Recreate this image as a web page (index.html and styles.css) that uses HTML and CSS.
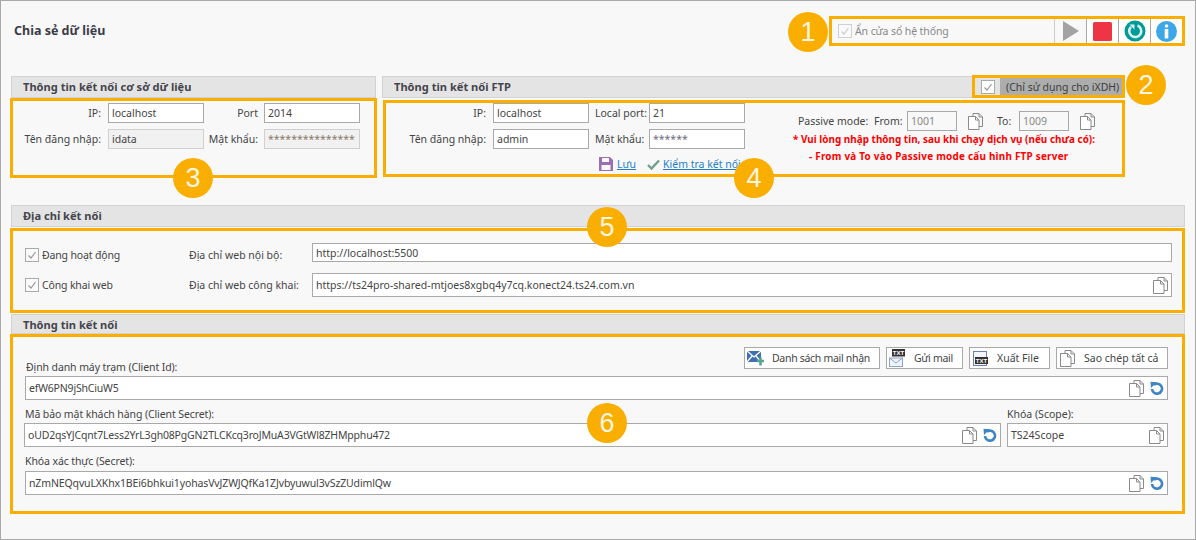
FILE: index.html
```html
<!DOCTYPE html>
<html lang="vi">
<head>
<meta charset="utf-8">
<title>Chia sẻ dữ liệu</title>
<link rel="stylesheet" href="styles.css">
</head>
<body>
<svg class="defs" width="0" height="0" aria-hidden="true">
  <symbol id="copy" viewBox="0 0 15 17">
    <path d="M5 3V.5h6l3.500 3.500v9.500H11" fill="none" stroke="#8a8a8a"/>
    <path d="M11 .5V4h3.500" fill="none" stroke="#8a8a8a"/>
    <path d="M.5 3.500h7L11 7v9.500H.5z" fill="#fff" stroke="#8a8a8a"/>
    <path d="M7.500 3.500V7H11" fill="none" stroke="#8a8a8a"/>
  </symbol>
  <symbol id="undo" viewBox="0 0 14 14">
    <path d="M3.800 3.800A5 5 0 1 1 2 8" fill="none" stroke="#3f84c4" stroke-width="2.600"/>
    <path d="M.5.800 6.800 1.200 1 7z" fill="#3f84c4"/>
  </symbol>
</svg>
<main class="page">
  <header class="topbar">
    <h1 class="title">Chia sẻ dữ liệu</h1>
    <div class="toolbar">
      <label class="tool-check"><span class="check check-off"><svg viewBox="0 0 12 12"><path d="M2.500 6.500 5 9l4.500-6" fill="none" stroke="currentColor" stroke-width="1.200"/></svg></span>Ẩn cửa sổ hệ thống</label>
      <button class="tool tool-play" type="button" aria-label="Chạy"><svg width="16" height="20" viewBox="0 0 16 20"><path d="M0 0 16 10 0 20z" fill="#a3a3a3"/></svg></button>
      <button class="tool" type="button" aria-label="Dừng"><svg width="19" height="19" viewBox="0 0 19 19"><rect width="19" height="19" rx="1.500" fill="#ee3546"/></svg></button>
      <button class="tool" type="button" aria-label="Tải lại"><svg width="22" height="22" viewBox="0 0 22 22"><circle cx="11" cy="11" r="10.500" fill="#009a97"/><path d="M7 6.800a6 6 0 1 0 6.500-1.300" fill="none" stroke="#d8f2f1" stroke-width="2.600"/><path d="M5.500 4.500h5v5z" fill="#d8f2f1"/></svg></button>
      <button class="tool tool-last" type="button" aria-label="Thông tin"><svg width="21" height="21" viewBox="0 0 21 21"><circle cx="10.500" cy="10.500" r="10.500" fill="#3da7e8"/><circle cx="10.500" cy="5" r="1.800" fill="#fff"/><rect x="8.700" y="8" width="3.600" height="9.500" rx=".6" fill="#fff"/></svg></button>
    </div>
  </header>

  <div class="columns">
    <section class="col-db">
      <h2 class="head head-inset">Thông tin kết nối cơ sở dữ liệu</h2>
      <div class="frame db-grid">
        <span class="lbl lbl-r">IP:</span><span class="field">localhost</span>
        <span class="lbl lbl-r lbl-r2">Port</span><span class="field">2014</span>
        <span class="lbl lbl-r">Tên đăng nhập:</span><span class="field field-off">idata</span>
        <span class="lbl lbl-r lbl-r2">Mật khẩu:</span><span class="field field-off field-pass">***************</span>
      </div>
    </section>
    <section class="col-ftp">
      <h2 class="head head-ftp">Thông tin kết nối FTP
        <span class="ixdh"><span class="ixdh-box"><span class="check"><svg viewBox="0 0 12 12"><path d="M2.500 6.500 5 9l4.500-6" fill="none" stroke="currentColor" stroke-width="1.200"/></svg></span></span><span class="ixdh-text">(Chỉ sử dụng cho iXDH)</span></span>
      </h2>
      <div class="frame ftp-frame">
        <div class="ftp-main">
          <div class="ftp-grid">
            <span class="lbl lbl-r">IP:</span><span class="field">localhost</span>
            <span class="lbl">Local port:</span><span class="field">21</span>
            <span class="lbl lbl-r">Tên đăng nhập:</span><span class="field">admin</span>
            <span class="lbl">Mật khẩu:</span><span class="field field-pass">******</span>
          </div>
          <div class="ftp-actions">
            <svg width="14" height="14" viewBox="0 0 14 14"><path d="M0 0h11l3 3v11H0z" fill="#9a6fb5"/><rect x="3" y="1" width="7" height="4" fill="#f8f8f8"/><rect x="2.500" y="8" width="9" height="5" fill="#f8f8f8"/></svg>
            <a class="link link-save" href="#">Lưu</a>
            <svg class="icon-test" width="13" height="11" viewBox="0 0 13 11"><path d="M1 6 4.500 9.500 12 1.500" fill="none" stroke="#6f9f8e" stroke-width="2.400"/></svg>
            <a class="link" href="#">Kiểm tra kết nối</a>
          </div>
        </div>
        <div class="passive">
          <div class="passive-row">
            <span class="lbl lbl-passive">Passive mode:</span>
            <span class="lbl lbl-from">From:</span>
            <span class="field field-num">1001</span>
            <svg class="ico-copy" width="15" height="17"><use href="#copy"/></svg>
            <span class="lbl lbl-to">To:</span>
            <span class="field field-num">1009</span>
            <svg class="ico-copy" width="15" height="17"><use href="#copy"/></svg>
          </div>
          <p class="warn warn-first">* Vui lòng nhập thông tin, sau khi chạy dịch vụ (nếu chưa có):</p>
          <p class="warn warn-second">- From và To vào Passive mode cấu hình FTP server</p>
        </div>
      </div>
    </section>
  </div>

  <section class="sec-addr">
    <h2 class="head head-inset">Địa chỉ kết nối</h2>
    <div class="frame addr-grid">
      <label class="tick addr-end"><span class="check"><svg viewBox="0 0 12 12"><path d="M2.500 6.500 5 9l4.500-6" fill="none" stroke="currentColor" stroke-width="1.200"/></svg></span>Đang hoạt động</label>
      <span class="lbl addr-end">Địa chỉ web nội bộ:</span>
      <span class="field field-line">http://localhost:5500</span>
      <label class="tick"><span class="check"><svg viewBox="0 0 12 12"><path d="M2.500 6.500 5 9l4.500-6" fill="none" stroke="currentColor" stroke-width="1.200"/></svg></span>Công khai web</label>
      <span class="lbl">Địa chỉ web công khai:</span>
      <span class="field field-line field-tall"><span class="val">https://ts24pro-shared-mtjoes8xgbq4y7cq.konect24.ts24.com.vn</span><svg width="15" height="17"><use href="#copy"/></svg></span>
    </div>
  </section>

  <section class="sec-info">
    <h2 class="head head-inset head-info">Thông tin kết nối</h2>
    <div class="frame info-frame">
      <div class="info-top">
        <span class="lbl info-lbl">Định danh máy trạm (Client Id):</span>
        <div class="btns">
          <button class="btn btn-a" type="button"><svg width="17" height="16" viewBox="0 0 17 16"><rect y="1" width="14" height="11" fill="#3f6fb5"/><path d="M0 1 7 7l7-6M0 12l5-6M14 12 9 6" fill="none" stroke="#fff" stroke-width="1.300"/><path d="M10 11h7M13.500 7.500v8" stroke="#5aa58f" stroke-width="2.600"/></svg>Danh sách mail nhận</button>
          <button class="btn btn-b" type="button"><svg width="16" height="18" viewBox="0 0 16 18"><rect x=".5" y="9" width="13" height="8.500" fill="#eef2fa" stroke="#8ea4cc"/><path d="M.5 9 7 14l6.500-5" fill="none" stroke="#8ea4cc"/><rect x="3" y="0" width="13" height="7.500" fill="#333"/><text class="ico-txt" x="9.500" y="6.300">TXT</text></svg>Gửi mail</button>
          <button class="btn btn-c" type="button"><svg width="15" height="15" viewBox="0 0 15 15"><rect x=".5" y=".5" width="13" height="14" fill="#f3f5fb" stroke="#6a7fb5"/><rect x="2" y="6" width="13" height="7" fill="#333"/><text class="ico-txt" x="8.500" y="12">TXT</text></svg>Xuất File</button>
          <button class="btn btn-d" type="button"><svg width="15" height="17"><use href="#copy"/></svg>Sao chép tất cả</button>
        </div>
      </div>
      <div class="field field-line field-tall"><span class="val val-key">efW6PN9jShCiuW5</span><svg width="15" height="17"><use href="#copy"/></svg><svg class="ico-undo" width="14" height="14"><use href="#undo"/></svg></div>
      <div class="secret-grid">
        <span class="lbl info-lbl">Mã bảo mật khách hàng (Client Secret):</span>
        <span class="lbl scope-lbl">Khóa (Scope):</span>
        <div class="field field-line field-tall"><span class="val val-key">oUD2qsYJCqnt7Less2YrL3gh08PgGN2TLCKcq3roJMuA3VGtWl8ZHMpphu472</span><svg width="15" height="17"><use href="#copy"/></svg><svg class="ico-undo" width="14" height="14"><use href="#undo"/></svg></div>
        <div class="field field-line field-tall"><span class="val">TS24Scope</span><svg width="15" height="17"><use href="#copy"/></svg></div>
      </div>
      <span class="lbl third-lbl">Khóa xác thực (Secret):</span>
      <div class="field field-line field-tall"><span class="val val-key val-wide">nZmNEQqvuLXKhx1BEi6bhkui1yohasVvJZWJQfKa1ZJvbyuwul3vSzZUdimlQw</span><svg width="15" height="17"><use href="#copy"/></svg><svg class="ico-undo" width="14" height="14"><use href="#undo"/></svg></div>
    </div>
  </section>

  <span class="badge badge-1">1</span>
  <span class="badge badge-2">2</span>
  <span class="badge badge-3">3</span>
  <span class="badge badge-4">4</span>
  <span class="badge badge-5">5</span>
  <span class="badge badge-6">6</span>
</main>
</body>
</html>
```

FILE: styles.css
```css
* { box-sizing: border-box; }
html, body { margin: 0; padding: 0; }
body { font: 10.5px/16px "Noto Sans", "Open Sans", sans-serif; color: #444; background: #f8f8f8; }
.defs { position: absolute; }
.page {
  position: relative;
  width: 1196px;
  height: 540px;
  border: 1px solid #a9a9a9;
  padding: 15px 10px 0 9px;
  background: #f8f8f8;
  overflow: hidden;
}
svg { display: block; flex: none; }
p, h1, h2 { margin: 0; }

/* top */
.topbar { display: flex; justify-content: space-between; align-items: center; height: 30px; }
.title { font-size: 12.5px; font-weight: 700; color: #3c3c48; padding-left: 4px; }
.toolbar {
  display: flex;
  width: 356px;
  height: 30px;
  border: 3px solid #f9ae00;
  background: #f8f8f8;
}
.tool-check { display: flex; align-items: center; gap: 3px; width: 222px; padding-left: 6px; color: #888; letter-spacing: -.1px; }
.tool {
  display: flex;
  align-items: center;
  justify-content: center;
  width: 32px;
  padding: 0;
  background: #fff;
  border: 0;
  border-left: 1.5px solid #a9a9a9;
}
.tool-play { background: #f8f8f8; border-left: 1px solid #ccc; }

.check {
  display: flex;
  width: 14px;
  height: 14px;
  flex: none;
  background: #fafafa;
  border: 1px solid #aaa;
  color: #999;
}
.check-off { border-color: #d0d0d0; color: #ccc; }

/* heads */
.head {
  height: 22px;
  font-size: 11.1px;
  line-height: 20px;
  font-weight: 700;
  color: #44444c;
  background: #e4e4e4;
  border: 1px solid #d2d2d2;
  padding-left: 11px;
}
.head-inset { margin: 0 1px; }
.frame { border: 3px solid #f9ae00; }

/* columns */
.columns { display: flex; gap: 5px; margin-top: 30px; }
.col-db { width: 367px; }
.col-ftp { width: 743px; }
.db-grid {
  height: 80px;
  padding: 2px 0 0;
  display: grid;
  grid-template-columns: 95px 96px 60px 96px;
  grid-auto-rows: 20px;
  row-gap: 6px;
  align-items: center;
}
.lbl { white-space: nowrap; }
.lbl-r { text-align: right; padding-right: 7px; }
.lbl-r2 { padding-right: 6px; }
.field {
  display: flex;
  align-items: center;
  height: 20px;
  background: #fff;
  border: 1px solid #a9a9a9;
  padding: 0 3px;
  color: #444;
  overflow: hidden;
  white-space: nowrap;
}
.field-off { background: #f1f1f1; border-color: #cfcfcf; }
.field-pass { color: #6d6d7d; align-items: flex-start; padding-top: 1px; }
.db-grid .field-pass { color: #8a7a66; }
.field-num { width: 50px; color: #888; background: #f8f8f8; flex: none; }

/* ftp */
.head-ftp { display: flex; justify-content: space-between; padding-right: 0; }
.ixdh {
  display: flex;
  width: 153px;
  height: 23px;
  margin: -2px -1px 0 0;
  border: 3px solid #f9ae00;
  font-weight: 400;
  font-size: 10.5px;
  white-space: nowrap;
}
.ixdh-box { display: flex; align-items: center; justify-content: center; width: 25px; background: #e4e4e4; }
.ixdh-box .check { background: #fff; }
.ixdh-text { flex: 1; padding-left: 6px; background: #adadad; color: #3c3c3c; line-height: 18px; }
.ftp-frame { display: flex; height: 77px; margin: 2px 0 0 1px; }
.ftp-main { width: 407px; }
.ftp-grid {
  display: grid;
  grid-template-columns: 107px 96px 60px 96px;
  grid-auto-rows: 20px;
  row-gap: 6px;
  align-items: center;
}
.ftp-grid .lbl:nth-child(4n+3) { padding-left: 6px; }
.ftp-actions { display: flex; align-items: center; height: 16px; margin-top: 7px; padding-left: 213px; }
.link { color: #1f80c8; text-decoration: underline; }
.link-save { width: 30px; margin-left: 4px; }
.icon-test { margin-right: 3px; }
.passive { padding-top: 8px; }
.passive-row { display: flex; align-items: center; height: 20px; padding-left: 5px; }
.lbl-passive { width: 76px; }
.lbl-from { width: 33px; }
.ico-copy { margin-left: 11px; }
.lbl-to { width: 22px; margin-left: 14px; }
.warn { font-weight: 700; font-size: 9.9px; line-height: 17px; color: #f00; white-space: nowrap; letter-spacing: .03px; }
.warn-first { margin-top: 0; }
.warn-second { margin-left: 16px; letter-spacing: .25px; }

/* address */
.sec-addr { margin-top: 27px; }
.sec-addr .head { margin-right: 0; }
.addr-grid {
  height: 85px;
  margin-top: 1px;
  padding: 12px 10px 0 12px;
  display: grid;
  grid-template-columns: 164px 123px 1fr;
  grid-template-rows: 19px 24px;
  row-gap: 11px;
  align-items: center;
}
.addr-end { align-self: end; margin-bottom: -1px; }
.tick { display: flex; align-items: center; gap: 3px; letter-spacing: -.15px; }
.field-line { justify-content: space-between; height: 19px; background: #fff; }
.field-tall { height: 24px; }
.val { flex: 1; }
.val-key { letter-spacing: -.18px; }
.val-wide { letter-spacing: -.13px; }
.ico-undo { margin: 0 0 0 6px; }

/* info */
.sec-info { margin-top: 1px; }
.head-info { height: 20px; line-height: 19px; margin-right: 0; }
.info-frame { height: 180px; padding: 10px 14px 0 12px; }
.info-top { display: flex; justify-content: space-between; height: 29px; }
.info-lbl { align-self: flex-end; padding: 0 0 1px 1px; letter-spacing: -.1px; }
.scope-lbl { align-self: end; padding-bottom: 1px; }
.btns { display: flex; gap: 6px; height: 22px; }
.btn {
  display: flex;
  align-items: center;
  height: 22px;
  padding: 0;
  background: #fff;
  border: 1px solid #a9a9a9;
  font: inherit;
  color: #444;
  white-space: nowrap;
}
.btn-a { width: 136px; padding-left: 2px; gap: 8px; letter-spacing: -.3px; }
.btn-b { width: 77px; padding-left: 2px; gap: 9px; letter-spacing: -.3px; }
.btn-c { width: 81px; padding-left: 3px; gap: 9px; }
.btn-d { width: 112px; padding-left: 3px; gap: 9px; }
.ico-txt { font: 700 6px "Liberation Sans", sans-serif; fill: #fff; text-anchor: middle; letter-spacing: 0; }
.secret-grid {
  display: grid;
  grid-template-columns: 977px 161px;
  grid-template-rows: 23px 24px;
  column-gap: 6px;
  margin-left: -1px;
  align-items: end;
}
.third-lbl { display: block; height: 24px; padding-top: 6px; letter-spacing: -.1px; }

/* number badges */
.badge {
  position: absolute;
  display: flex;
  align-items: center;
  justify-content: center;
  width: 40px;
  height: 40px;
  border-radius: 50%;
  background: #f9ae00;
  color: #fff6e0;
  font: 27px/40px "Liberation Sans", Arial, sans-serif;
}
.badge-1 { left: 787px; top: 11px; }
.badge-2 { left: 1125px; top: 64px; }
.badge-3 { left: 172px; top: 157px; }
.badge-4 { left: 733px; top: 157px; }
.badge-5 { left: 586px; top: 206px; }
.badge-6 { left: 586px; top: 402px; }
```
